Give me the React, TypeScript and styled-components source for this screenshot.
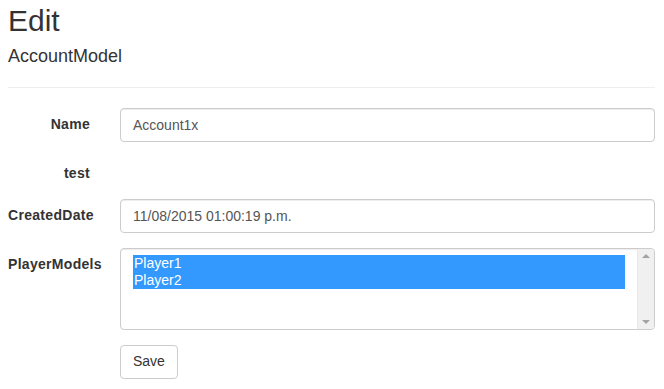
import React from "react";
import styled, { createGlobalStyle } from "styled-components";

const Global = createGlobalStyle`
  html, body { margin: 0; padding: 0; background: #fff; }
  body {
    font-family: "Liberation Sans", Arial, Helvetica, sans-serif;
    font-size: 14px;
    line-height: 1.42857;
    color: #333;
  }
  * { box-sizing: border-box; }
`;

const Page = styled.div`
  padding: 4px 9px 0 8px;
`;

const Title = styled.h2`
  font-size: 30px;
  font-weight: 500;
  line-height: 1.1;
  margin: 0 0 10px;
`;

const Subtitle = styled.h4`
  font-size: 18px;
  font-weight: 500;
  line-height: 1.1;
  margin: 10px 0 10px;
`;

const Rule = styled.hr`
  margin: 20px 0;
  border: 0;
  border-top: 1px solid #eee;
`;

const Form = styled.div`
  display: flex;
  flex-direction: column;
  gap: 15px;
`;

const Row = styled.div`
  display: grid;
  grid-template-columns: 82px 1fr;
  column-gap: 30px;
  align-items: start;
`;

const Label = styled.label`
  display: block;
  text-align: right;
  font-weight: 700;
  letter-spacing: 0.3px;
  padding-top: 7px;
  white-space: nowrap;
`;

const Input = styled.div`
  height: 34px;
  padding: 7px 12px 5px;
  font-size: 14px;
  line-height: 1.42857;
  color: #555;
  background: #fff;
  border: 1px solid #ccc;
  border-radius: 4px;
  box-shadow: inset 0 1px 1px rgba(0, 0, 0, 0.075);
`;

const ListBox = styled.div`
  height: 82px;
  border: 1px solid #ccc;
  border-radius: 4px;
  box-shadow: inset 0 1px 1px rgba(0, 0, 0, 0.075);
  display: flex;
  background: #fff;
  overflow: hidden;
`;

const Options = styled.div`
  flex: 1;
  padding: 6px 12px;
`;

const Option = styled.div`
  background: #3399ff;
  color: #fff;
  font-size: 14px;
  line-height: 17px;
  height: 17px;
  padding-left: 1px;
`;

const Scrollbar = styled.div`
  width: 17px;
  background: #f0f0f0;
  border-left: 1px solid #e8e8e8;
  display: flex;
  flex-direction: column;
  justify-content: space-between;
  align-items: center;
  padding: 5px 0;
`;

const Arrow = styled.div<{ $down?: boolean }>`
  width: 0;
  height: 0;
  border-left: 4px solid transparent;
  border-right: 4px solid transparent;
  ${(p) =>
    p.$down
      ? "border-top: 4px solid #a3a3a3;"
      : "border-bottom: 4px solid #a3a3a3;"}
`;

const Button = styled.button`
  font-family: inherit;
  font-size: 14px;
  line-height: 1.42857;
  padding: 6px 12px;
  color: #333;
  background: #fff;
  border: 1px solid #ccc;
  border-radius: 4px;
  justify-self: start;
`;

export default function App() {
  return (
    <>
      <Global />
      <Page>
        <Title>Edit</Title>
        <Subtitle>AccountModel</Subtitle>
        <Rule />
        <Form>
          <Row>
            <Label>Name</Label>
            <Input>Account1x</Input>
          </Row>
          <Row>
            <Label>test</Label>
            <div />
          </Row>
          <Row>
            <Label>CreatedDate</Label>
            <Input>11/08/2015 01:00:19 p.m.</Input>
          </Row>
          <Row>
            <Label>PlayerModels</Label>
            <ListBox>
              <Options>
                <Option>Player1</Option>
                <Option>Player2</Option>
              </Options>
              <Scrollbar>
                <Arrow />
                <Arrow $down />
              </Scrollbar>
            </ListBox>
          </Row>
          <Row>
            <div />
            <Button>Save</Button>
          </Row>
        </Form>
      </Page>
    </>
  );
}
